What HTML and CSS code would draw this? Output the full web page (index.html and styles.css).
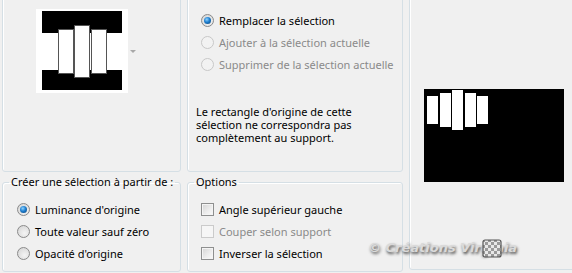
FILE: index.html
```html
<!DOCTYPE html>
<html lang="fr">
  <head>
    <meta charset="UTF-8" />
    <title>Sélection depuis un masque</title>
    <link rel="stylesheet" href="styles.css">
  </head>
  <body>
    <div class="dialog">
      <div class="panel source">
        <div class="picker">
          <svg class="thumb" width="92" height="84" viewBox="0 0 92 84">
            <rect width="92" height="84" fill="#fff" />
            <rect x="6" y="2" width="80" height="22" fill="#000" />
            <rect x="6" y="61" width="80" height="20" fill="#000" />
            <rect x="22.5" y="20.5" width="15" height="44" fill="#fff" stroke="#555" />
            <rect x="38.5" y="16.5" width="15" height="52" fill="#fff" stroke="#555" />
            <rect x="55.5" y="20.5" width="15" height="44" fill="#fff" stroke="#555" />
          </svg>
          <span class="arrow"></span>
        </div>
      </div>

      <div class="panel mode">
        <div class="choices">
          <label class="choice"><span class="radio on"></span>Remplacer la sélection</label>
          <label class="choice off"><span class="radio"></span>Ajouter à la sélection actuelle</label>
          <label class="choice off"><span class="radio"></span>Supprimer de la sélection actuelle</label>
        </div>
        <p class="note">
          <span>Le rectangle d'origine de cette</span>
          <span>sélection ne correspondra pas</span>
          <span>complètement au support.</span>
        </p>
      </div>

      <div class="panel preview">
        <svg width="140" height="93" viewBox="0 0 140 93">
          <rect width="140" height="93" fill="#000" />
          <rect x="3" y="7" width="11" height="28" fill="#fff" />
          <rect x="16" y="4" width="11" height="34" fill="#fff" />
          <rect x="28" y="1" width="11" height="40" fill="#fff" />
          <rect x="41" y="4" width="11" height="34" fill="#fff" />
          <rect x="53" y="7" width="11" height="28" fill="#fff" />
        </svg>
      </div>

      <fieldset class="group">
        <legend>Créer une sélection à partir de :</legend>
        <div class="choices">
          <label class="choice"><span class="radio on"></span>Luminance d'origine</label>
          <label class="choice"><span class="radio"></span>Toute valeur sauf zéro</label>
          <label class="choice"><span class="radio"></span>Opacité d'origine</label>
        </div>
      </fieldset>

      <fieldset class="group options">
        <legend>Options</legend>
        <div class="choices">
          <label class="choice"><span class="check"></span>Angle supérieur gauche</label>
          <label class="choice off"><span class="check"></span>Couper selon support</label>
          <label class="choice"><span class="check"></span>Inverser la sélection</label>
        </div>
      </fieldset>
    </div>

    <div class="watermark">
      © Créations Virginia
      <svg class="tile" width="20" height="19" viewBox="0 0 20 19">
        <defs>
          <pattern id="chk" width="6" height="6" patternUnits="userSpaceOnUse">
            <rect width="6" height="6" fill="#e8e8e8" />
            <rect width="3" height="3" fill="#9a9a9a" />
            <rect x="3" y="3" width="3" height="3" fill="#9a9a9a" />
          </pattern>
        </defs>
        <rect x="1" y="1" width="18" height="17" rx="2" fill="url(#chk)" stroke="#555" stroke-width="1.2" />
      </svg>
    </div>
  </body>
</html>
```

FILE: styles.css
```css
* {
  box-sizing: border-box;
}

body {
  margin: 0;
  width: 572px;
  height: 273px;
  overflow: hidden;
  position: relative;
  background-color: #f0f0f0;
  font-family: "Noto Sans", sans-serif;
  font-size: 11px;
  color: #000;
}

.dialog {
  display: grid;
  grid-template-columns: 179px 216px 180px;
  grid-template-rows: 176px 97px;
  column-gap: 6px;
  row-gap: 3px;
  margin: -4px 0 0 2px;
}

.panel {
  border: 1px solid #d5dfe5;
  border-radius: 3px;
  box-shadow: inset 1px 1px 0 #fff;
}

/* top left: source image */
.source {
  padding: 12px 0 0 33px;
}

.picker {
  display: flex;
  align-items: center;
  gap: 2px;
}

.thumb {
  display: block;
}

.arrow {
  width: 0;
  height: 0;
  border-left: 3px solid transparent;
  border-right: 3px solid transparent;
  border-top: 3px solid #a8a8a8;
}

/* top middle: mode */
.mode {
  padding: 12px 0 0 8px;
}

.mode .choices {
  margin-left: 5px;
}

.note {
  margin: 30px 0 0;
  display: flex;
  flex-direction: column;
}

.note span {
  display: block;
  height: 13px;
  line-height: 13px;
}

/* right: preview */
.preview {
  grid-column: 3;
  grid-row: 1 / 3;
  margin-bottom: 2px;
  display: flex;
  align-items: center;
  padding-left: 14px;
}

.preview svg {
  display: block;
  margin-top: 4px;
}

/* bottom group boxes */
.group {
  margin: 0;
  padding: 9px 0 0 6px;
  border: 1px solid #d5dfe5;
  border-radius: 3px;
  box-shadow: inset 1px 1px 0 #fff;
  min-width: 0;
}

.group legend {
  padding: 0 2px;
  line-height: 14px;
}

.group .choices {
  padding-left: 8px;
}

.options .choices {
  padding-left: 7px;
}

.choices {
  display: flex;
  flex-direction: column;
}

.choice {
  display: flex;
  align-items: center;
  gap: 5px;
  height: 22px;
  white-space: nowrap;
}

.choice.off {
  color: #8a8a8a;
}

.radio {
  width: 13px;
  height: 13px;
  flex: none;
  border-radius: 50%;
  border: 1px solid #8a8a8a;
  background: radial-gradient(circle at 60% 65%, #f4f4f4 0%, #dcdcdc 70%, #cfcfcf 100%);
  position: relative;
}

.radio.on::after {
  content: "";
  position: absolute;
  left: 2px;
  top: 2px;
  width: 7px;
  height: 7px;
  border-radius: 50%;
  background: radial-gradient(circle at 40% 35%, #8fd3ff 0%, #1d7ecf 45%, #0b3f72 100%);
}

.off .radio {
  border-color: #c8c8c8;
  background: #f2f2f2;
}

.check {
  width: 13px;
  height: 13px;
  flex: none;
  border: 1px solid #8e8f8f;
  background: linear-gradient(135deg, #d4d4d4 0%, #eeeeee 60%, #fafafa 100%);
  box-shadow: inset 0 0 0 1px #f4f4f4;
}

.off .check {
  border-color: #cbcbcb;
  background: #f6f6f6;
  box-shadow: none;
}

/* overlay watermark */
.watermark {
  position: absolute;
  left: 368px;
  top: 240px;
  display: flex;
  align-items: center;
  font-family: "DejaVu Sans", sans-serif;
  font-size: 13px;
  font-weight: bold;
  font-style: italic;
  color: #dadada;
  text-shadow: 1px 2px 3px #4a4a4a;
  white-space: nowrap;
}

.tile {
  position: absolute;
  left: 114px;
  top: -1px;
}
```
